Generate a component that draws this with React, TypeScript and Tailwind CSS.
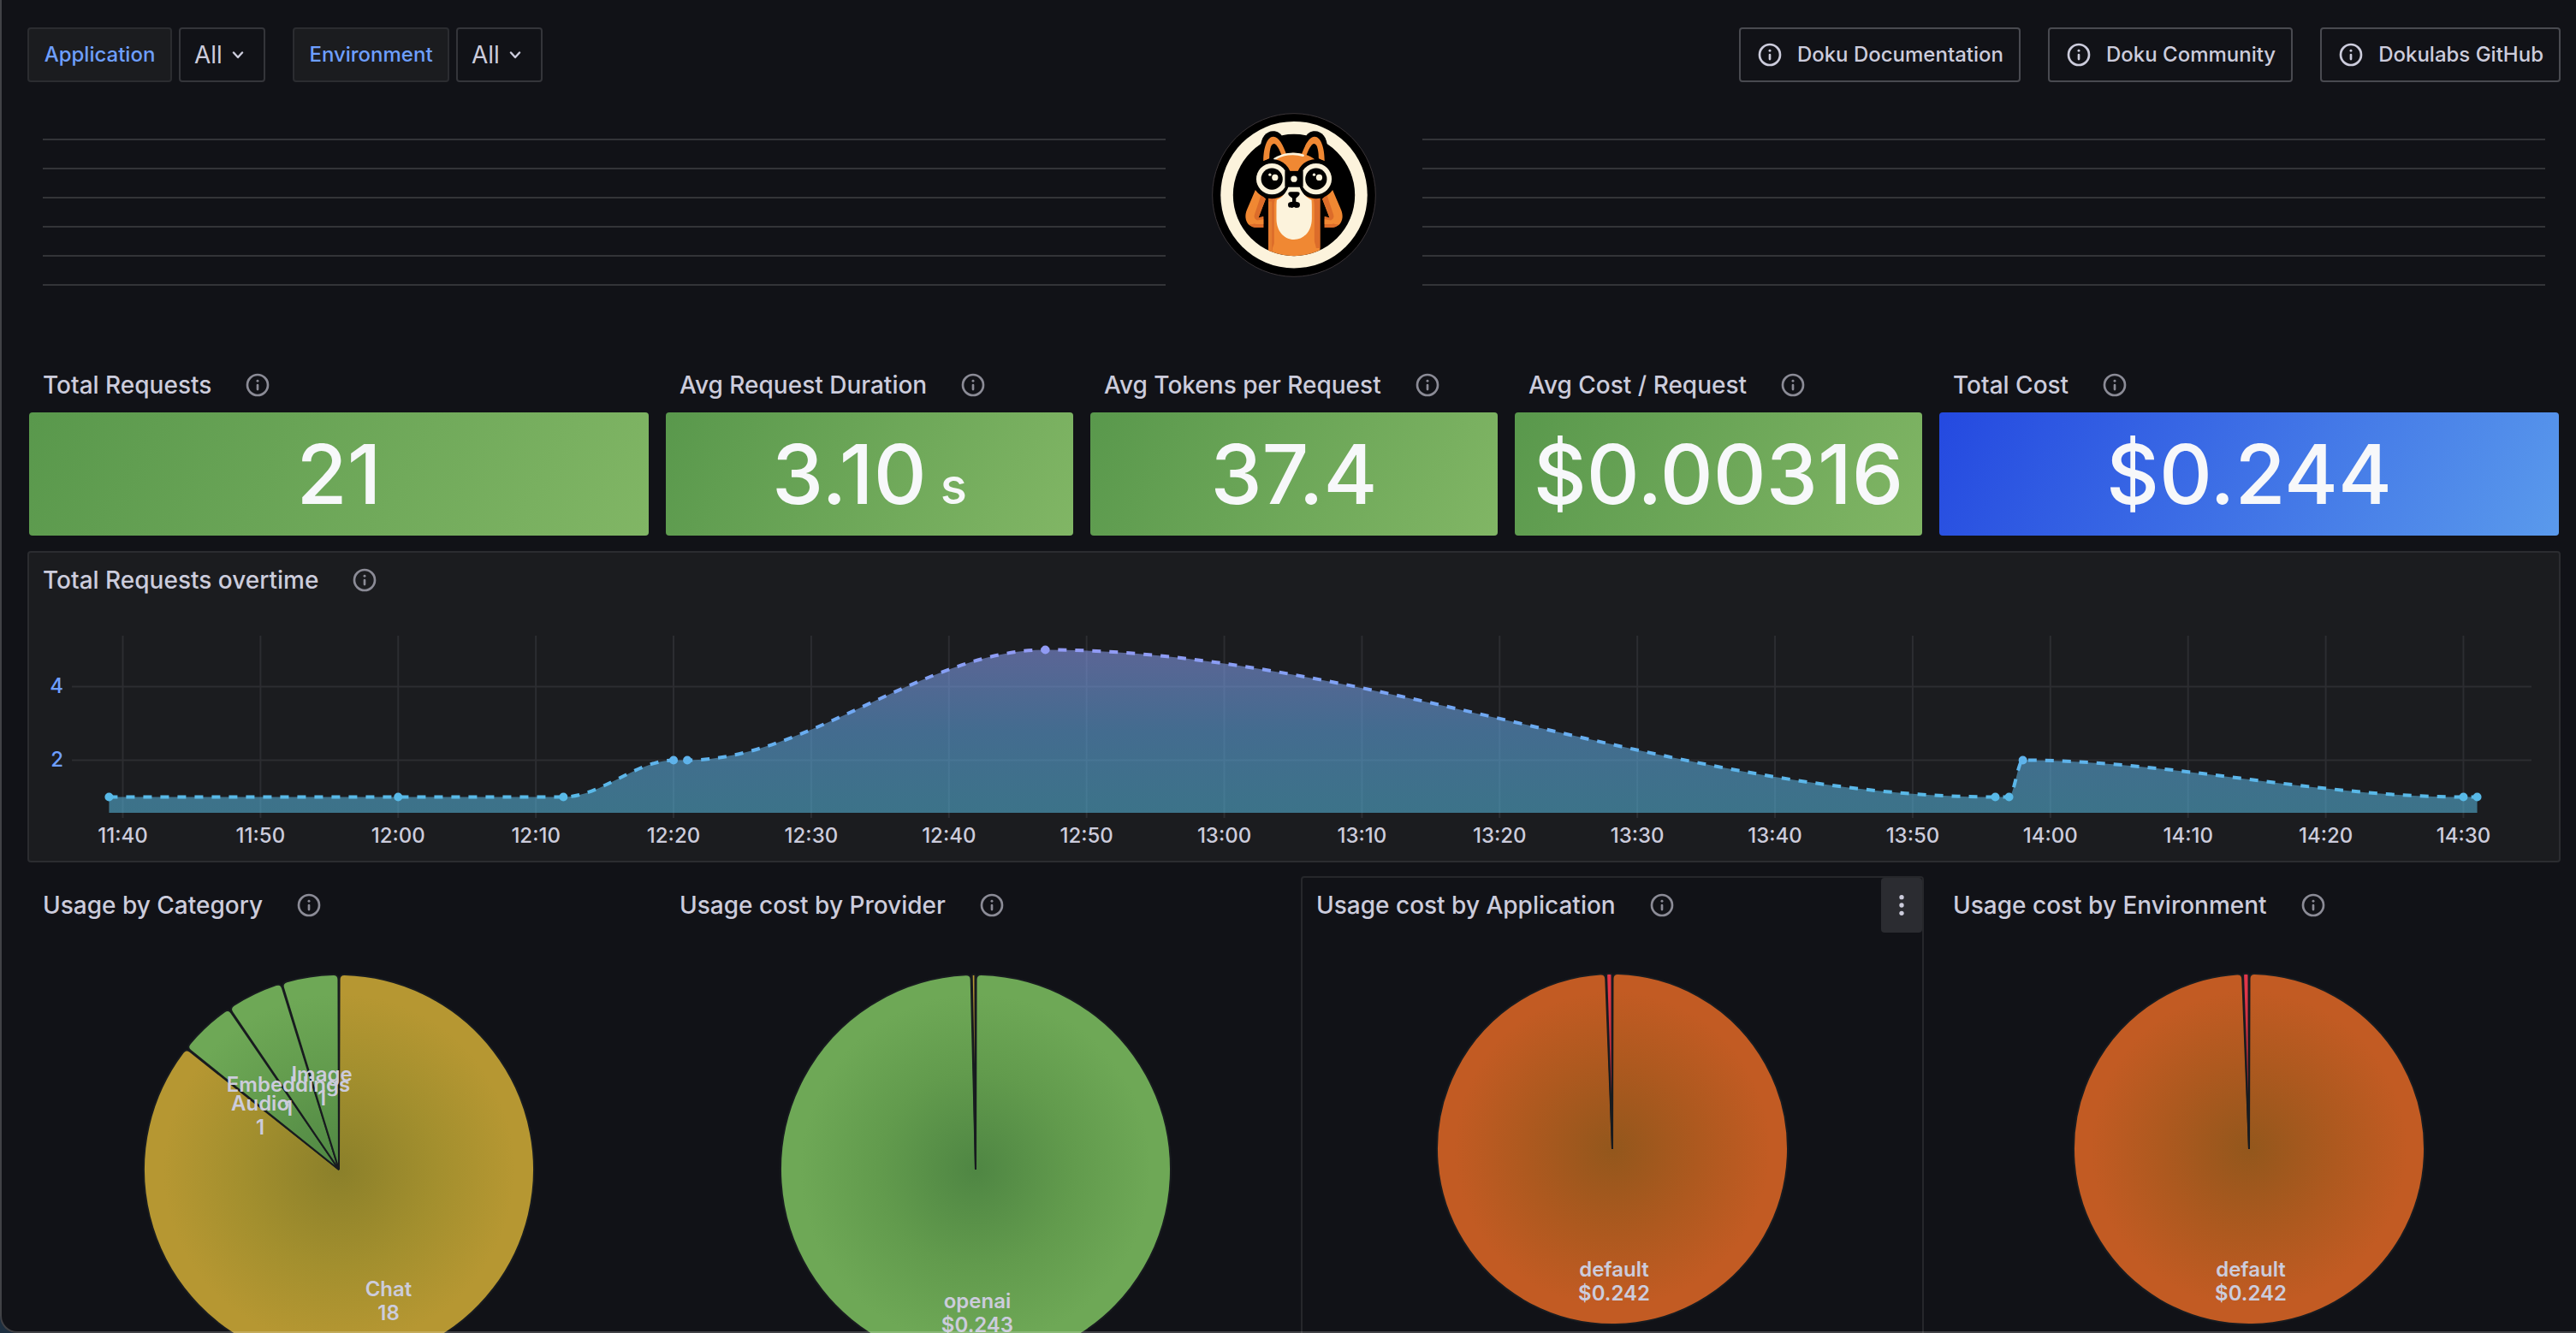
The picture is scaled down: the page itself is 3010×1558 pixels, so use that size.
import { useId, type ReactNode } from 'react';

function InfoIcon({ className = '' }: { className?: string }) {
  return (
    <svg viewBox="0 0 24 24" className={`size-8 shrink-0 ${className}`} aria-hidden="true">
      <circle cx="12" cy="12" r="9" fill="none" stroke="currentColor" strokeWidth="2" />
      <circle cx="12" cy="8.4" r="1.1" fill="currentColor" />
      <rect x="11" y="11" width="2" height="5.8" rx="1" fill="currentColor" />
    </svg>
  );
}

function Variable({ label, width }: { label: string; width: string }) {
  const id = useId();
  return (
    <div className="flex h-16 gap-2">
      <label
        htmlFor={id}
        className={`flex items-center justify-center rounded-sm border-2 border-[#2b2c30] bg-[#1b1c1f] text-[24px] font-medium text-[#6e9fff] ${width}`}
      >
        {label}
      </label>
      <div className="relative">
        <select
          id={id}
          className="h-16 w-[101px] appearance-none rounded-sm border-2 border-[#34353a] bg-[#111217] pl-4 text-[28px] text-[#ccccdc]"
        >
          <option>All</option>
        </select>
        <svg
          viewBox="0 0 14 9"
          className="pointer-events-none absolute top-7 left-[62px] h-[9px] w-[14px]"
          aria-hidden="true"
        >
          <path d="M2 1.5 7 7l5-5.500" fill="none" stroke="#ccccdc" strokeWidth="2.400" strokeLinecap="round" strokeLinejoin="round" />
        </svg>
      </div>
    </div>
  );
}

function DocLink({ children }: { children: ReactNode }) {
  return (
    <a
      href="#"
      className="flex h-16 items-center gap-4 rounded-sm border-2 border-[#494a50] px-[18px] text-[24px] font-medium text-[#ccccdc]"
    >
      <InfoIcon />
      {children}
    </a>
  );
}

function Rules() {
  return (
    <div className="col-span-11 flex flex-col gap-8 px-[18px] pt-[50px]">
      {[0, 1, 2, 3, 4, 5].map((i) => (
        <hr key={i} className="h-0.5 border-0 bg-[#333438]" />
      ))}
    </div>
  );
}

function FoxSide() {
  return (
    <g>
      <path d="M368 186C368 150 388 127 412 127c16 0 28 8 34 22l24 60-94 40z" fill="#000" />
      <path d="M378 234c0-50 14-87 35-87 20 0 34 30 46 62l-16 14H400z" fill="#f08833" />
      <path d="M399 234c-1-36 5-62 16-62 10 0 20 22 28 42l-22 18z" fill="#000" />
      <path d="M350 334 320 404c-14 34 2 64 36 64h22v-38l-18 5 26-68z" fill="#f08833" />
      <path d="M370 352 386 366 360 433l18-5v40h-22c-14 0-22-5-28-12 18 2 24-4 20-14-2-6-4-14 0-24z" fill="#dc6c2a" />
      <path d="M366 356 348 404c-8 22-4 32 8 38l22-4v18h-24c-20-4-30-22-22-44l22-60z" fill="#f08833" />
    </g>
  );
}

function Goggle({ cx }: { cx: number }) {
  return (
    <g>
      <circle cx={cx} cy="296" r="70" fill="#000" />
      <circle cx={cx} cy="296" r="55" fill="#fcf3dc" />
      <circle cx={cx} cy="296" r="38" fill="#000" />
      <circle cx={cx + 11} cy="291" r="11" fill="#fcf3dc" />
      <circle cx={cx - 7} cy="281" r="5" fill="#fcf3dc" />
    </g>
  );
}

function Logo() {
  return (
    <svg viewBox="196 63 580 580" className="size-48" role="img" aria-label="Doku">
      <defs>
        <clipPath id="logo-inner">
          <circle cx="486" cy="353" r="215" />
        </clipPath>
      </defs>
      <circle cx="486" cy="353" r="288" fill="#000" stroke="#3a3437" strokeWidth="3" />
      <circle cx="486" cy="352" r="259" fill="#fcf3dc" />
      <circle cx="486" cy="353" r="215" fill="#000" />
      <FoxSide />
      <g transform="translate(972 0) scale(-1 1)">
        <FoxSide />
      </g>
      <g clipPath="url(#logo-inner)">
        <rect x="396" y="350" width="182" height="220" fill="#f08833" />
        <path d="M396 360h28c-8 12-8 20-8 40v120c0 10-6 14-6 30h-14z" fill="#dc6c2a" />
        <path d="M578 360h-28c8 12 8 20 8 40v110c0 12 4 16 6 30h14z" fill="#dc6c2a" />
        <path d="M396 376h12v180h-12z" fill="#e57c2f" />
      </g>
      <path d="M412 234c14-20 44-30 74-30s60 10 74 24l-50 44h-48z" fill="#f08833" />
      <path d="M418 226c26-18 66-24 100-13" fill="none" stroke="#fcf3dc" strokeWidth="8" strokeLinecap="round" />
      <Goggle cx={408} />
      <Goggle cx={564} />
      <path d="M466 324h40c8 22 24 38 42 46 1 10 1 20 1 30v36c0 44-28 74-63 74s-62-30-62-74v-36c0-10 0-20 1-30 18-8 33-24 41-46z" fill="#fcf3dc" />
      <rect x="454" y="268" width="64" height="56" fill="#000" />
      <circle cx="486" cy="296" r="11" fill="#fcf3dc" />
      <path d="M474 342h24c10 0 10 10 4 14l-9 8v12c4 4 14 0 14 12 0 10-8 10-14 10l-7-3-7 3c-6 0-14 0-14-10 0-12 10-8 15-12v-12l-10-8c-6-4-6-14 4-14z" fill="#000" />
    </svg>
  );
}

function PanelHeader({ title }: { title: string }) {
  return (
    <header className="flex h-16 items-center gap-[38px] pl-4">
      <h2 className="text-[28px] font-medium whitespace-nowrap text-[#ccccdc]">{title}</h2>
      <button type="button" aria-label={`About ${title}`} className="text-[#8b8b96]">
        <InfoIcon />
      </button>
    </header>
  );
}

const GREEN = 'bg-[linear-gradient(120deg,#59984c,#81b665)]';
const BLUE = 'bg-[linear-gradient(120deg,#2449e0,#5a9aec)]';

const stats = [
  { title: 'Total Requests', value: '21', span: 'col-span-6', fill: GREEN },
  { title: 'Avg Request Duration', value: '3.10', unit: 's', span: 'col-span-4', fill: GREEN },
  { title: 'Avg Tokens per Request', value: '37.4', span: 'col-span-4', fill: GREEN },
  { title: 'Avg Cost / Request', value: '$0.00316', span: 'col-span-4', fill: GREEN },
  { title: 'Total Cost', value: '$0.244', span: 'col-span-6', fill: BLUE },
];

const ticks = [
  '11:40', '11:50', '12:00', '12:10', '12:20', '12:30', '12:40', '12:50', '13:00',
  '13:10', '13:20', '13:30', '13:40', '13:50', '14:00', '14:10', '14:20', '14:30',
];

/* [minutes after 11:40, requests] */
const series: [number, number][] = [
  [-1, 1], [20, 1], [32, 1], [40, 2], [41, 2], [67, 5],
  [136, 1], [137, 1], [138, 2], [170, 1], [171, 1],
];

const chartX = (minute: number) => 109.5 + minute * 16.088;
const chartY = (count: number) => 264.5 - count * 43;

function RequestsChart() {
  const points = series.map(([m, c]) => [chartX(m), chartY(c)]);
  const line = points
    .map(([x, y], i) => {
      if (i === 0) return `M${x} ${y}`;
      const [px, py] = points[i - 1];
      const third = (x - px) / 3;
      return `C${px + third} ${py} ${x - third} ${y} ${x} ${y}`;
    })
    .join('');
  const area = `${line}V240H${points[0][0]}Z`;
  return (
    <svg viewBox="0 0 2956 296" className="w-full" role="img" aria-label="Total requests over time">
      <defs>
        <linearGradient id="req-line" gradientUnits="userSpaceOnUse" x1="0" y1="240" x2="0" y2="49">
          <stop offset="0" stopColor="#56bce6" />
          <stop offset="0.330" stopColor="#5fb3ec" />
          <stop offset="0.650" stopColor="#73a7f4" />
          <stop offset="1" stopColor="#929bf5" />
        </linearGradient>
        <linearGradient id="req-area" gradientUnits="userSpaceOnUse" x1="0" y1="240" x2="0" y2="49">
          <stop offset="0" stopColor="#52add0" />
          <stop offset="0.500" stopColor="#5ea1da" />
          <stop offset="1" stopColor="#8696e5" />
        </linearGradient>
      </defs>
      <g stroke="#2c2d31" strokeWidth="2">
        {ticks.map((t, i) => (
          <path key={t} d={`M${chartX(i * 10)} 33V246`} />
        ))}
        <path d="M50 92.500H2924M50 178.500H2924" />
      </g>
      <path d={area} fill="url(#req-area)" fillOpacity="0.600" />
      <path d={line} fill="none" stroke="url(#req-line)" strokeWidth="4" strokeDasharray="10 10" />
      {points.map(([x, y]) => (
        <circle key={x} cx={x} cy={y} r="5" fill="url(#req-line)" />
      ))}
      <g fontSize="24" fontWeight="500" fill="#ccccdc" textAnchor="middle">
        {ticks.map((t, i) => (
          <text key={t} x={chartX(i * 10)} y="275">
            {t}
          </text>
        ))}
      </g>
      <g fontSize="24" fontWeight="500" fill="#6e9fff" textAnchor="end">
        <text x="40" y="100">4</text>
        <text x="40" y="186">2</text>
      </g>
    </svg>
  );
}

type Slice = { share: number; color: keyof typeof sliceColors };
type Label = { x: number; y: number; name: string; value: string };
type PieData = { title: string; cy: number; r: number; slices: Slice[]; labels: Label[]; hovered?: boolean };

const sliceColors = {
  yellow: ['#8b802a', '#a38f2e', '#b69732'],
  green: ['#4f8643', '#629b4d', '#6ea856'],
  orange: ['#93571c', '#ae591f', '#c25b23'],
  red: ['#8a2230', '#b72c3c', '#e0364a'],
};

const pies: PieData[] = [
  {
    title: 'Usage by Category',
    cy: 277,
    r: 228,
    slices: [
      { share: 18 / 21, color: 'yellow' },
      { share: 1 / 21, color: 'green' },
      { share: 1 / 21, color: 'green' },
      { share: 1 / 21, color: 'green' },
    ],
    labels: [
      { x: 420, y: 425, name: 'Chat', value: '18' },
      { x: 270, y: 208, name: 'Audio', value: '1' },
      { x: 303, y: 186, name: 'Embeddings', value: '1' },
      { x: 342, y: 174, name: 'Image', value: '1' },
    ],
  },
  {
    title: 'Usage cost by Provider',
    cy: 277,
    r: 228,
    slices: [
      { share: 0.9966, color: 'green' },
      { share: 0.0034, color: 'yellow' },
    ],
    labels: [{ x: 364, y: 439, name: 'openai', value: '$0.243' }],
  },
  {
    title: 'Usage cost by Application',
    cy: 253,
    r: 205,
    hovered: true,
    slices: [
      { share: 0.9942, color: 'orange' },
      { share: 0.0058, color: 'red' },
    ],
    labels: [{ x: 364, y: 402, name: 'default', value: '$0.242' }],
  },
  {
    title: 'Usage cost by Environment',
    cy: 253,
    r: 205,
    slices: [
      { share: 0.9942, color: 'orange' },
      { share: 0.0058, color: 'red' },
    ],
    labels: [{ x: 364, y: 402, name: 'default', value: '$0.242' }],
  },
];

function slicePath(cx: number, cy: number, r: number, start: number, end: number) {
  const a0 = start + 0.0025;
  const a1 = end - 0.0025;
  const corner = Math.min(6, ((a1 - a0) * r) / 3);
  const at = (angle: number, radius: number) => `${cx + Math.sin(angle) * radius} ${cy - Math.cos(angle) * radius}`;
  const large = a1 - a0 > Math.PI ? 1 : 0;
  const turn = corner / r;
  return [
    `M${cx} ${cy}L${at(a0, r - corner)}`,
    `Q${at(a0, r)} ${at(a0 + turn, r)}`,
    `A${r} ${r} 0 ${large} 1 ${at(a1 - turn, r)}`,
    `Q${at(a1, r)} ${at(a1, r - corner)}Z`,
  ].join('');
}

function Pie({ id, pie }: { id: string; pie: PieData }) {
  const cx = 362;
  const { cy, r } = pie;
  let angle = 0;
  return (
    <svg viewBox="0 0 724 520" className="w-full" role="img" aria-label={pie.title}>
      <defs>
        {Object.entries(sliceColors).map(([name, [inner, mid, outer]]) => (
          <radialGradient key={name} id={`${id}-${name}`} gradientUnits="userSpaceOnUse" cx={cx} cy={cy} r={r}>
            <stop offset="0" stopColor={inner} />
            <stop offset="0.500" stopColor={mid} />
            <stop offset="0.900" stopColor={outer} />
          </radialGradient>
        ))}
      </defs>
      <g stroke="#181b1f" strokeWidth="2" strokeLinejoin="bevel">
        {pie.slices.map((slice, i) => {
          const start = angle;
          angle += slice.share * Math.PI * 2;
          return <path key={i} d={slicePath(cx, cy, r, start, angle)} fill={`url(#${id}-${slice.color})`} />;
        })}
      </g>
      <g fontSize="24" fontWeight="600" fill="#ccccdc" textAnchor="middle">
        {pie.labels.map((l) => (
          <text key={l.name} x={l.x} y={l.y}>
            {l.name}
            <tspan x={l.x} dy="28">
              {l.value}
            </tspan>
          </text>
        ))}
      </g>
    </svg>
  );
}

export default function App() {
  return (
    <div className="relative h-screen overflow-hidden bg-[#111217] font-['Inter',sans-serif]">
      <div className="flex flex-col gap-4 pt-8 pr-[18px] pl-8">
        <nav className="flex items-center justify-between">
          <div className="flex gap-8">
            <Variable label="Application" width="w-[169px]" />
            <Variable label="Environment" width="w-[183px]" />
          </div>
          <div className="flex gap-8">
            <DocLink>Doku Documentation</DocLink>
            <DocLink>Doku Community</DocLink>
            <DocLink>Dokulabs GitHub</DocLink>
          </div>
        </nav>

        <main className="grid grid-cols-[repeat(24,minmax(0,1fr))] gap-4">
          <Rules />
          <div className="col-span-2 flex h-72 justify-center pt-5">
            <Logo />
          </div>
          <Rules />

          {stats.map((s) => (
            <section key={s.title} className={`border-2 border-transparent ${s.span}`}>
              <PanelHeader title={s.title} />
              <div
                className={`flex h-36 items-center justify-center rounded-sm text-[96px] leading-none font-medium text-[#f7f8fa] ${s.fill}`}
              >
                <p className="whitespace-nowrap">
                  {s.value}
                  {s.unit && <span className="ml-4 text-[58px]">{s.unit}</span>}
                </p>
              </div>
            </section>
          ))}

          <section className="col-span-full rounded-sm border-2 border-[#2b2c30] bg-[#1b1c1f]">
            <PanelHeader title="Total Requests overtime" />
            <RequestsChart />
          </section>

          {pies.map((p, i) => (
            <section
              key={p.title}
              className={`relative col-span-6 rounded-sm border-2 ${p.hovered ? 'border-[#26272b]' : 'border-transparent'}`}
            >
              <PanelHeader title={p.title} />
              {p.hovered && (
                <button
                  type="button"
                  aria-label="Panel menu"
                  className="absolute top-0 right-0 flex h-16 w-12 items-center justify-center rounded-sm bg-[#2b2c31] text-[#ccccdc]"
                >
                  <svg viewBox="0 0 24 24" className="size-8" fill="currentColor" aria-hidden="true">
                    <circle cx="12" cy="5" r="2" />
                    <circle cx="12" cy="12" r="2" />
                    <circle cx="12" cy="19" r="2" />
                  </svg>
                </button>
              )}
              <Pie id={`pie-${i}`} pie={p} />
            </section>
          ))}
        </main>
      </div>
      <div className="pointer-events-none absolute inset-0 rounded-bl-[20px] border-b-2 border-l-2 border-white/20 shadow-[0_0_0_20px_#1d2f40]" />
    </div>
  );
}
